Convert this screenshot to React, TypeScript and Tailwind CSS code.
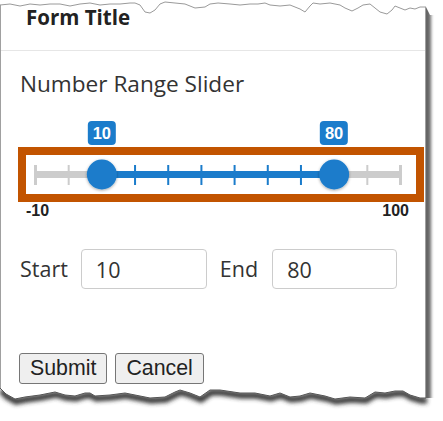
import React from "react";

const topPts: [number, number][] = [
  [0, 5], [10, 4], [20, 6], [30, 4], [40, 5], [50, 4], [60, 4], [70, 6], [80, 4], [90, 3],
  [100, 5], [110, 4], [120, 4], [130, 3], [135, 3], [140, 5], [145, 12], [150, 13], [155, 10],
  [160, 4], [165, 2], [175, 3], [185, 4], [195, 8], [205, 7], [210, 4], [218, 3], [230, 4],
  [240, 5], [250, 4], [258, 4], [265, 3], [270, 5], [280, 6], [290, 5], [300, 9], [305, 12],
  [310, 6], [313, 3], [320, 4], [330, 3], [340, 5], [345, 8], [352, 11], [358, 8], [363, 5],
  [370, 4], [375, 8], [380, 12], [387, 14], [392, 10], [395, 6], [400, 8], [405, 10], [410, 8],
  [415, 9], [420, 7], [426, 7],
];

const botPts: [number, number][] = [
  [0, 388], [6, 394], [15, 399], [25, 397], [40, 395], [55, 392], [65, 395], [75, 396], [85, 393],
  [90, 393], [95, 396], [110, 395], [125, 393], [135, 395], [150, 398], [165, 397], [175, 392],
  [180, 390], [190, 393], [200, 397], [210, 390], [220, 390], [240, 393], [255, 393], [270, 396],
  [280, 393], [290, 397], [300, 396], [310, 393], [325, 396], [335, 399], [350, 397], [365, 398],
  [375, 392], [385, 393], [395, 391], [403, 391], [410, 395], [420, 398], [426, 398],
];

const line = (pts: [number, number][], dy = 0) =>
  pts.map(([x, y], i) => `${i === 0 ? "M" : "L"}${x},${y - dy}`).join(" ");

const MIN = -10;
const MAX = 100;
const STEP = 10;
const START = 10;
const END = 80;

function Slider() {
  const x0 = 9.5;
  const x1 = 374.5;
  const n = (MAX - MIN) / STEP;
  const pos = (v: number) => x0 + ((v - MIN) / (MAX - MIN)) * (x1 - x0);
  const ticks = Array.from({ length: n + 1 }, (_, i) => MIN + i * STEP);
  const s = pos(START);
  const e = pos(END);
  return (
    <div className="ml-[17px] w-[406px]">
      <div className="relative h-[26px]">
        {[START, END].map((v) => (
          <div
            key={v}
            className="absolute top-0 h-[24px] -translate-x-1/2 rounded-[4px] bg-[#1b7ccb] px-[5px] text-[16.5px] font-bold leading-[24px] text-white"
            style={{ left: 8 + pos(v), fontFamily: '"Liberation Sans", Arial, sans-serif' }}
          >
            {v}
          </div>
        ))}
      </div>
      <div className="h-[55px] border-[8px] border-[#c25400] bg-white">
        <svg width="390" height="39" viewBox="0 0 390 39" className="block">
          <defs>
            <filter id="hs" x="-50%" y="-50%" width="200%" height="200%">
              <feDropShadow dx="0" dy="1" stdDeviation="1.6" floodColor="#000" floodOpacity="0.35" />
            </filter>
          </defs>
          <rect x={8} y={16} width={368} height={7} fill="#cccccc" />
          <rect x={s} y={16} width={e - s} height={7} fill="#1b7ccb" />
          {ticks.map((v, i) => {
            const x = pos(v);
            const end = i === 0 || i === n;
            const inRange = v > START && v < END;
            return (
              <rect
                key={v}
                x={x - (end ? 1.5 : 1)}
                y={10}
                width={end ? 3 : 2}
                height={20}
                fill={inRange ? "#1b7ccb" : "#cccccc"}
              />
            );
          })}
          <circle cx={s} cy={19.5} r={15} fill="#1b7ccb" filter="url(#hs)" />
          <circle cx={e} cy={19.5} r={15} fill="#1b7ccb" filter="url(#hs)" />
        </svg>
      </div>
      <div
        className="ml-[8px] flex h-[18px] w-[383px] justify-between text-[16px] font-bold leading-[18px] text-[#222]"
        style={{ fontFamily: '"Liberation Sans", Arial, sans-serif' }}
      >
        <span>{MIN}</span>
        <span>{MAX}</span>
      </div>
    </div>
  );
}

export default function App() {
  return (
    <div
      className="relative h-[421px] w-[443px] overflow-hidden bg-white text-[#333]"
      style={{ fontFamily: '"Open Sans", "Noto Sans", sans-serif' }}
    >
      <div className="h-[405px] w-[426px] border-x border-[#a0a0a0] bg-white shadow-[5px_3px_3px_rgba(0,0,0,0.6)]">
        <div className="h-[51px] border-b border-[#e6e6e6] pl-[25px] pt-[4px]">
          <div className="text-[20.5px] font-bold leading-[27px] text-[#222]">Form Title</div>
        </div>
        <div className="mt-[18px] pl-[19px] text-[22.6px] leading-[30px]">Number Range Slider</div>
        <div className="mt-[22px]">
          <Slider />
        </div>
        <div className="mt-[29px] flex items-center pl-[19px] text-[21.5px]">
          <span className="mr-[13px]">Start</span>
          <input
            readOnly
            defaultValue="10"
            className="h-[40px] w-[126px] rounded-[4px] border border-[#cccccc] px-[14px] text-[21.5px] text-[#333] outline-none"
          />
          <span className="ml-[13px] mr-[14px]">End</span>
          <input
            readOnly
            defaultValue="80"
            className="h-[40px] w-[125px] rounded-[4px] border border-[#cccccc] px-[14px] text-[21.5px] text-[#333] outline-none"
          />
        </div>
        <div
          className="mt-[64px] flex gap-[8px] pl-[18px] text-[21.33px] leading-[25px] text-[#222]"
          style={{ fontFamily: '"Liberation Sans", Arial, sans-serif' }}
        >
          <button className="h-[31px] rounded-[3px] border border-[#767676] bg-[#efefef] px-[10px]">Submit</button>
          <button className="h-[31px] rounded-[3px] border border-[#767676] bg-[#efefef] px-[10px]">Cancel</button>
        </div>
      </div>

      <svg className="absolute left-0 top-0" width="443" height="20" viewBox="0 0 443 20">
        <path d={`M0,0 ${line(topPts).replace(/^M/, "L")} L430,15 L443,15 L443,0 Z`} fill="#ffffff" />
        <path d={line(topPts)} fill="none" stroke="#9a9a9a" strokeWidth="1" />
      </svg>

      <svg className="absolute left-0 top-[380px]" width="443" height="41" viewBox="0 0 443 41">
        <defs>
          <clipPath id="below">
            <path d={`${line(botPts, 380)} L434,18 L434,41 L0,41 Z`} />
          </clipPath>
          <filter id="blur" x="-10%" y="-100%" width="120%" height="300%">
            <feGaussianBlur stdDeviation="2" />
          </filter>
        </defs>
        <path d={`${line(botPts, 380)} L434,18 L443,18 L443,41 L0,41 Z`} fill="#ffffff" />
        <g clipPath="url(#below)">
          <path
            d={line(botPts, 380)}
            transform="translate(1,2.5)"
            fill="none"
            stroke="#333"
            strokeWidth="6"
            filter="url(#blur)"
          />
        </g>
        <path d={line(botPts, 380)} fill="none" stroke="#555" strokeWidth="1" />
      </svg>
    </div>
  );
}
